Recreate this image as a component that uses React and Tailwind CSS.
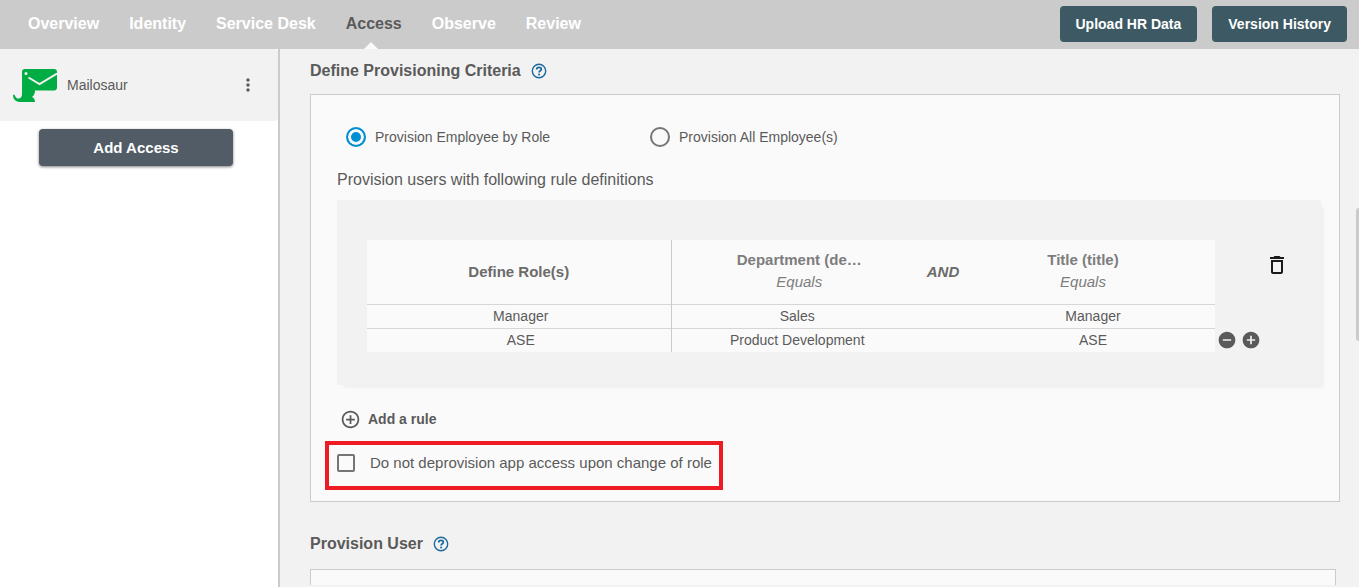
import { useState } from "react";
import {
  MdAddCircle,
  MdAddCircleOutline,
  MdDeleteOutline,
  MdMoreVert,
  MdRemoveCircle,
} from "react-icons/md";

const tabs = ["Overview", "Identity", "Service Desk", "Access", "Observe", "Review"];

const rules = [
  { role: "Manager", department: "Sales", title: "Manager" },
  { role: "ASE", department: "Product Development", title: "ASE" },
];

function MailosaurLogo() {
  return (
    <svg width="44" height="33" viewBox="0 0 44 33" aria-hidden="true">
      <path
        d="M12 0H41Q44 0 44 3V18.500Q44 21.500 41 21.500H22C22 24.500 21 26.500 19 28C21 29 22 30.500 22 33H8C3 33 0 30.500 0 26C1.200 25.600 1.800 26.200 2.200 27.200C3 29 4.500 29.800 6 29.500C8 29 9 27.500 9 25V3Q9 0 12 0Z"
        fill="#00ad45"
      />
      <circle cx="13" cy="4.500" r="1.500" fill="#f2f2f2" />
      <path d="M15.500 8.500L26.500 15L44 4.500" fill="none" stroke="#f2f2f2" strokeWidth="2" />
    </svg>
  );
}

function HelpIcon() {
  return (
    <svg width="16" height="16" viewBox="0 0 16 16" fill="none" stroke="currentColor" aria-hidden="true">
      <circle cx="8" cy="8" r="6.700" strokeWidth="1.400" />
      <path
        d="M5.700 6.400C5.700 5 6.700 4.300 8 4.300C9.400 4.300 10.300 5.100 10.300 6.200C10.300 7.700 8.100 7.700 8.100 9.500"
        strokeWidth="1.800"
      />
      <circle cx="8.100" cy="11.500" r="1.050" fill="currentColor" stroke="none" />
    </svg>
  );
}

function Header({ active, onSelect }) {
  return (
    <header className="flex h-[49px] shrink-0 items-start justify-between bg-[#cbcbcb] pr-3 pl-7">
      <nav className="flex gap-[30px] text-base font-bold">
        {tabs.map((tab) => (
          <a
            key={tab}
            href="#"
            onClick={() => onSelect(tab)}
            className={`relative h-[49px] pt-3 leading-6 whitespace-nowrap ${
              tab === active ? "text-[#5a5a5a]" : "text-white"
            }`}
          >
            {tab}
            {tab === active && (
              <svg
                className="absolute bottom-0 left-[18px]"
                width="14"
                height="7"
                viewBox="0 0 14 7"
              >
                <path d="M0 7L7 0L14 7Z" fill="#fafafa" />
              </svg>
            )}
          </a>
        ))}
      </nav>
      <div className="flex gap-[15px] pt-[6px]">
        <button className="h-9 rounded bg-[#3d5a64] px-4 text-sm font-bold text-white">
          Upload HR Data
        </button>
        <button className="h-9 rounded bg-[#3d5a64] px-4 text-sm font-bold text-white">
          Version History
        </button>
      </div>
    </header>
  );
}

function Sidebar() {
  return (
    <aside className="w-[280px] shrink-0 border-r-2 border-[#cbcbcb] bg-white">
      <div className="flex h-[72px] items-center rounded-r bg-[#f2f2f2] pr-5 pl-[13px]">
        <MailosaurLogo />
        <span className="ml-[10px] flex-1 text-sm">Mailosaur</span>
        <button aria-label="More options">
          <MdMoreVert size={20} />
        </button>
      </div>
      <button className="mt-2 ml-[39px] block w-[194px] rounded bg-[#515c66] pt-[7px] pb-[6px] text-[15px] leading-6 font-bold text-white shadow-[0_1px_3px_rgba(0,0,0,0.5)]">
        Add Access
      </button>
    </aside>
  );
}

function SectionTitle({ children }) {
  return (
    <h2 className="flex items-center gap-[10px] text-base leading-6 font-bold">
      {children}
      <button aria-label="Help" className="text-[#1c6a9e]">
        <HelpIcon />
      </button>
    </h2>
  );
}

function ScopeOption({ label, value, scope, onChange, className = "" }) {
  return (
    <label className={`flex items-center gap-[9px] text-sm ${className}`}>
      <input
        type="radio"
        name="scope"
        value={value}
        checked={scope === value}
        onChange={() => onChange(value)}
        className="size-5 appearance-none rounded-full border-2 border-[#757575] checked:border-[#008fd3] checked:bg-[#008fd3] checked:shadow-[inset_0_0_0_3px_#fafafa]"
      />
      {label}
    </label>
  );
}

function RuleCard() {
  return (
    <div className="mt-2 flex bg-[#f2f2f2] pt-10 pb-[33px] pl-[30px] shadow-[4px_4px_4px_-2px_rgba(0,0,0,0.06)]">
      <div className="min-w-0 flex-1">
        <table className="w-full table-fixed border-collapse bg-[#fafafa] text-center text-sm">
          <colgroup>
            <col className="w-[304px]" />
            <col />
            <col className="w-12" />
            <col />
          </colgroup>
          <thead className="text-[15px] leading-[22px] text-[#7d7d7d]">
            <tr className="h-16">
              <th className="border-r border-[#cbcbcb] text-[#6b6b6b]">Define Role(s)</th>
              <th className="pb-[2px] pl-2">
                <div>Department (de…</div>
                <div className="font-normal italic">Equals</div>
              </th>
              <th className="text-[#6b6b6b] italic">AND</th>
              <th className="pr-4 pb-[2px]">
                <div>Title (title)</div>
                <div className="font-normal italic">Equals</div>
              </th>
            </tr>
          </thead>
          <tbody>
            {rules.map((rule) => (
              <tr key={rule.role} className="h-6 border-t border-[#d6d6d6]">
                <td className="border-r border-[#cbcbcb] pl-1">{rule.role}</td>
                <td className="pl-1">{rule.department}</td>
                <td />
                <td className="pl-1">{rule.title}</td>
              </tr>
            ))}
          </tbody>
        </table>
      </div>
      <div className="flex w-[106px] flex-col justify-between pt-[13px] pb-[2px]">
        <button aria-label="Delete rule" className="mr-8 self-end text-[#1a1a1a]">
          <MdDeleteOutline size={24} />
        </button>
        <div className="flex gap-1 pl-[2px]">
          <button aria-label="Remove row">
            <MdRemoveCircle size={20} />
          </button>
          <button aria-label="Add row">
            <MdAddCircle size={20} />
          </button>
        </div>
      </div>
    </div>
  );
}

export default function App() {
  const [active, setActive] = useState("Access");
  const [scope, setScope] = useState("role");
  const [keepAccess, setKeepAccess] = useState(false);

  return (
    <div className="flex h-screen flex-col overflow-hidden bg-[#f2f2f2] font-['Liberation_Sans',Arial,sans-serif] text-[#5a5a5a]">
      <Header active={active} onSelect={setActive} />
      <div className="flex min-h-0 flex-1">
        <Sidebar />
        <main className="relative flex min-w-0 flex-1 flex-col pt-[10px] pr-[19px] pb-[2px] pl-[30px]">
          <SectionTitle>Define Provisioning Criteria</SectionTitle>
          <section className="mt-[11px] border border-[#cbcbcb] bg-[#fafafa] pt-8 pr-[18px] pb-[11px] pl-[26px]">
            <div className="flex pl-[9px]">
              <ScopeOption
                label="Provision Employee by Role"
                value="role"
                scope={scope}
                onChange={setScope}
                className="w-[304px]"
              />
              <ScopeOption
                label="Provision All Employee(s)"
                value="all"
                scope={scope}
                onChange={setScope}
              />
            </div>
            <p className="mt-[21px] text-base leading-6">
              Provision users with following rule definitions
            </p>
            <RuleCard />
            <button className="mt-[22px] ml-[3px] flex h-6 items-center gap-[7px] text-sm font-bold">
              <MdAddCircleOutline size={21} />
              Add a rule
            </button>
            <label className="mt-[10px] -ml-3 flex w-fit items-center gap-[15px] border-4 border-[#ed1c24] pt-[6px] pr-[7px] pb-[11px] pl-2 text-[15px] leading-6">
              <input
                type="checkbox"
                checked={keepAccess}
                onChange={(e) => setKeepAccess(e.target.checked)}
                className="size-[18px] appearance-none rounded-xs border-2 border-[#757575] checked:bg-[#757575]"
              />
              Do not deprovision app access upon change of role
            </label>
          </section>
          <div className="mt-[30px]">
            <SectionTitle>Provision User</SectionTitle>
          </div>
          <section className="mt-[13px] mr-1 flex-1 border border-b-0 border-[#cbcbcb] bg-[#fafafa]" />
          {/* scroll thumb */}
          <div className="absolute top-[159px] right-0 h-[133px] w-[3px] rounded-l bg-[#cbcbcb]" />
        </main>
      </div>
    </div>
  );
}
